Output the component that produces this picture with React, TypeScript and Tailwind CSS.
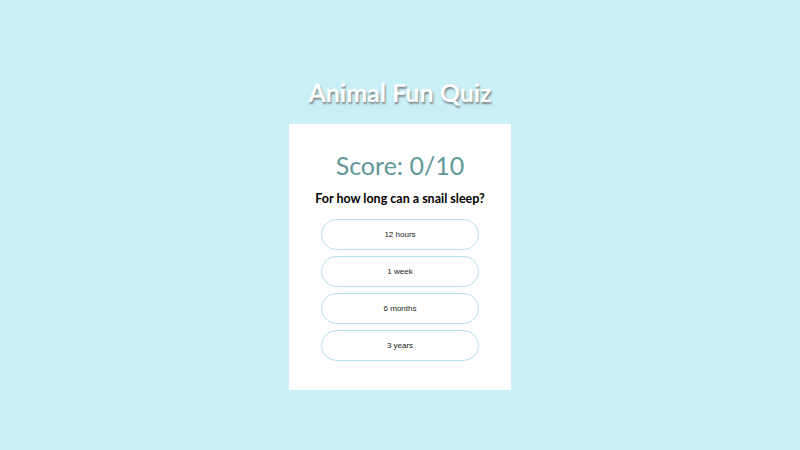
import React, { useState } from 'react';

const answers = ['12 hours', '1 week', '6 months', '3 years'];

export default function App() {
  const [score, setScore] = useState(0);

  return (
    <div className="min-h-[450px] w-full bg-[#c9eff7] flex flex-col items-center pt-[75px] font-['Lato','Noto_Sans',sans-serif]">
      <h1 className="text-[25px] leading-[34px] font-bold text-white [text-shadow:1px_2px_2px_rgba(80,80,80,0.65)]">
        Animal Fun Quiz
      </h1>
      <div className="mt-[15px] w-[222px] bg-white flex flex-col items-center pt-[24px] pb-[29px]">
        <div className="text-[25px] leading-[34px] text-[#5f9a9b]">Score: {score}/10</div>
        <div className="mt-[7px] text-[12.5px] leading-[19px] font-bold text-black">For how long can a snail sleep?</div>
        <div className="mt-[11px] flex flex-col gap-[6px]">
          {answers.map((a) => (
            <button
              key={a}
              onClick={() => a === '3 years' && setScore(score + 1)}
              className="w-[158px] h-[31px] pt-[1px] rounded-full border border-[#b4e2ec] bg-white text-[8px] text-[#222] font-['Liberation_Sans',Arial,sans-serif]"
            >
              {a}
            </button>
          ))}
        </div>
      </div>
    </div>
  );
}
